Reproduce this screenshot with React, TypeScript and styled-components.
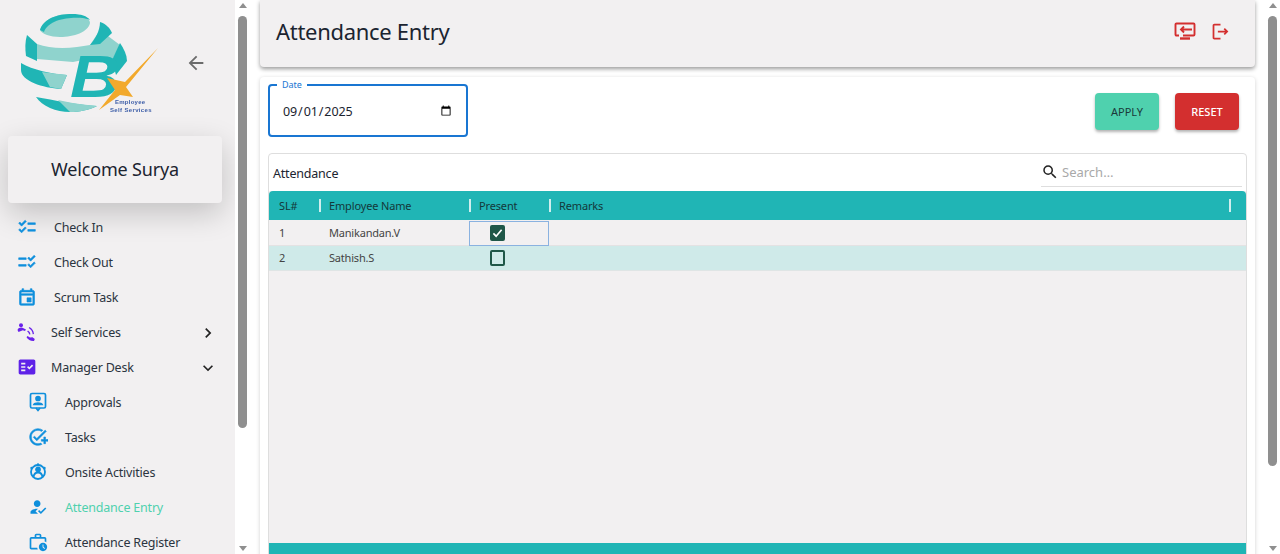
import React from "react";
import styled, { createGlobalStyle } from "styled-components";
import {
  MdArrowBack,
  MdChecklist,
  MdChecklistRtl,
  MdChevronLeft,
  MdChevronRight,
  MdExpandMore,
  MdFactCheck,
  MdHowToReg,
  MdOutlineAddTask,
  MdOutlineEvent,
  MdOutlineLogout,
  MdOutlineWorkHistory,
  MdSearch,
} from "react-icons/md";

const GlobalStyle = createGlobalStyle`
  html, body { margin: 0; padding: 0; height: 100%; overflow: hidden; background: #fff; }
  body {
    font-family: "Noto Sans", "Liberation Sans", sans-serif;
    color: #1f2a37;
  }
  * { box-sizing: border-box; }
`;

const Shell = styled.div`
  display: flex;
  height: 100vh;
  overflow: hidden;
`;

const ScrollTrack = styled.div`
  width: 15px;
  flex: none;
  height: 100vh;
  padding: 3px 3px;
  display: flex;
  flex-direction: column;
  align-items: center;
  background: #fff;
`;

const ScrollArrowUp = styled.span`
  flex: none;
  width: 0;
  height: 0;
  border-left: 4.5px solid transparent;
  border-right: 4.5px solid transparent;
  border-bottom: 5px solid #8f8f8f;
`;

const ScrollArrowDown = styled(ScrollArrowUp)`
  margin-top: auto;
  border-bottom: 0;
  border-top: 5px solid #8f8f8f;
`;

const ScrollThumb = styled.span<{ $height: number }>`
  flex: none;
  width: 9px;
  height: ${(p) => p.$height}px;
  margin-top: 8px;
  border-radius: 5px;
  background: #8f8f8f;
`;

const Sidebar = styled.aside`
  width: 235px;
  flex: none;
  height: 100vh;
  overflow: hidden;
  background: #f2f0f1;
`;

const LogoRow = styled.div`
  height: 128px;
  display: flex;
  align-items: flex-start;
  position: relative;

  > svg {
    filter: blur(0.35px);
  }
`;

const BackButton = styled.button`
  position: absolute;
  left: 185px;
  top: 52px;
  border: 0;
  background: none;
  padding: 0;
  width: 22px;
  height: 22px;
  color: #6b6b6b;
  font-size: 22px;
  line-height: 0;
`;

const WelcomeCard = styled.div`
  margin: 8px 13px 6px 8px;
  height: 67px;
  padding-bottom: 1px;
  display: flex;
  align-items: center;
  justify-content: center;
  border-radius: 4px;
  background: #f2f0f1;
  font-size: 18px;
  letter-spacing: -0.15px;
  color: #1b2430;
  box-shadow: 0 10px 30px rgba(0, 0, 0, 0.2);
`;

const MenuRow = styled.div<{ $indent: number; $active?: boolean }>`
  height: 35px;
  display: flex;
  align-items: center;
  padding: 2px 0 0 ${(p) => p.$indent}px;
  font-size: 12.5px;
  letter-spacing: -0.2px;
  color: ${(p) => (p.$active ? "#4fd1ae" : "#2b3440")};
  position: relative;
`;

const MenuIcon = styled.span<{ $width: number; $color?: string; $bold?: boolean }>`
  width: ${(p) => p.$width}px;
  flex: none;
  margin-top: -2px;
  display: flex;
  align-items: center;
  font-size: 20px;
  color: ${(p) => p.$color ?? "#0f8fdc"};

  ${(p) => (p.$bold ? `svg path:not([fill="none"]) { stroke-width: 0.7; }` : "")}
`;

const MenuCaret = styled.span`
  position: absolute;
  left: 198px;
  top: 9px;
  font-size: 20px;
  line-height: 0;
  color: #222;
`;

const Main = styled.main`
  flex: 1;
  min-width: 0;
  height: 100vh;
  overflow: hidden;
  padding: 0 10px;
  background: #fff;
`;

const TitleBar = styled.header`
  height: 67px;
  display: flex;
  align-items: center;
  justify-content: space-between;
  padding: 0 24px 5px 16px;
  background: #f2f0f1;
  border-radius: 0 0 4px 4px;
  box-shadow: 0 2px 4px rgba(0, 0, 0, 0.4);
`;

const Title = styled.h1`
  margin: 0;
  font-size: 22px;
  letter-spacing: -0.3px;
  font-weight: 400;
  color: #1b2430;
`;

const TitleActions = styled.div`
  display: flex;
  align-items: center;
  gap: 14px;
  color: #d32f2f;
  font-size: 21px;
`;

const Card = styled.section`
  margin-top: 10px;
  height: 555px;
  padding: 8px;
  background: #fff;
  border-radius: 4px;
  box-shadow: 0 1px 4px rgba(0, 0, 0, 0.18);
`;

const FilterRow = styled.div`
  height: 68px;
  display: flex;
  justify-content: space-between;
  align-items: flex-start;
`;

const DateField = styled.fieldset`
  width: 200px;
  height: 58px;
  margin: -6px 0 0;
  padding: 0 12px 0 12px;
  border: 2px solid #1976d2;
  border-radius: 4px;
  display: flex;
  align-items: center;

  legend {
    margin-left: -5px;
    padding: 0 5px;
    font-size: 9px;
    line-height: 11px;
    color: #1976d2;
  }
`;

const DateInput = styled.input`
  width: 100%;
  margin-top: -3px;
  padding: 0;
  border: 0;
  outline: 0;
  background: none;
  font-family: inherit;
  font-size: 12.5px;
  letter-spacing: -0.1px;
  color: #1b2430;
`;

const FilterActions = styled.div`
  display: flex;
  gap: 16px;
  padding: 8px 8px 0 0;
`;

const ActionButton = styled.button<{ $danger?: boolean }>`
  width: 64px;
  height: 37px;
  padding: 0;
  border: 0;
  border-radius: 4px;
  font-family: inherit;
  font-size: 11px;
  font-weight: ${(p) => (p.$danger ? 500 : 400)};
  background: ${(p) => (p.$danger ? "#d32f2f" : "#4fd1ae")};
  color: ${(p) => (p.$danger ? "#fff" : "#1b3a3a")};
  box-shadow: 0 2px 3px rgba(0, 0, 0, 0.3);
`;

const TableBox = styled.div`
  border: 1px solid #dedede;
  border-radius: 4px;
  background: #f2f0f1;
`;

const TableToolbar = styled.div`
  height: 37px;
  display: flex;
  align-items: center;
  justify-content: space-between;
  padding: 2px 4px 0;
  background: #fff;
  border-radius: 4px 4px 0 0;
  font-size: 12.5px;
  letter-spacing: -0.2px;
  color: #1b2430;
`;

const SearchBox = styled.div`
  width: 201px;
  height: 33px;
  margin-bottom: 6px;
  padding-top: 4px;
  display: flex;
  align-items: center;
  gap: 3px;
  border-bottom: 1px solid #dedede;
  font-size: 13px;
  letter-spacing: 0;
  color: #a9a9a9;

  svg {
    font-size: 18px;
    color: #222;
  }
`;

const TableGrid = styled.div`
  display: grid;
  grid-template-columns: 50px 150px 80px 1fr;
`;

const HeadCell = styled.div`
  height: 29px;
  margin-bottom: 1px;
  display: flex;
  align-items: center;
  padding-left: 10px;
  position: relative;
  background: #20b5b5;
  font-size: 11px;
  letter-spacing: -0.15px;
  color: #14383a;

  &::after {
    content: "";
    position: absolute;
    z-index: 1;
    right: -2px;
    top: 8px;
    width: 2px;
    height: 13px;
    background: #cfeeee;
  }

  &:first-child {
    border-top-left-radius: 4px;
  }
`;

const RemarksHead = styled(HeadCell)`
  border-top-right-radius: 4px;

  &::after {
    right: 15px;
  }
`;

const Cell = styled.div<{ $striped?: boolean; $focused?: boolean }>`
  height: 25px;
  display: flex;
  align-items: center;
  padding: 0 0 2px 10px;
  font-size: 11px;
  letter-spacing: -0.2px;
  color: #444;
  background: ${(p) => (p.$striped ? "#cfeae9" : "#f2f0f1")};
  border-bottom: 1px solid ${(p) => (p.$striped ? "#dfe5e5" : "#e4e2e3")};
  outline: ${(p) => (p.$focused ? "1px solid #8ab2e0" : "none")};
  outline-offset: -1px;
`;

const CheckBox = styled.span<{ $checked?: boolean }>`
  width: 15px;
  height: 16px;
  margin: 2px 0 0 11px;
  display: flex;
  align-items: center;
  justify-content: center;
  border-radius: 2px;
  border: 2px solid #1f5748;
  background: ${(p) => (p.$checked ? "#1f5748" : "transparent")};
`;

const TableBody = styled.div`
  height: 272px;
`;

const TableFooter = styled.footer`
  height: 52px;
  display: flex;
  justify-content: flex-end;
  align-items: flex-start;
  gap: 8px;
  padding: 8px 12px 0 0;
  background: #20b5b5;
  font-size: 12px;
  color: #14383a;

  svg {
    font-size: 24px;
    color: #12696b;
  }
`;

const PageLabel = styled.span`
  margin-right: 16px;
`;

const ScreenIcon = () => (
  <svg width="22" height="22" viewBox="0 0 22 22" fill="none" stroke="currentColor" strokeWidth="1.9">
    <path d="M5 15.5H2.5a1 1 0 0 1-1-1V4.5a1 1 0 0 1 1-1h17a1 1 0 0 1 1 1v10a1 1 0 0 1-1 1H9" />
    <path d="M7 9.5h11M10 6.5l-3 3 3 3" />
    <path d="M6 18.5h10" strokeWidth="2.4" />
  </svg>
);

const SelfServiceIcon = () => (
  <svg width="20" height="20" viewBox="0 0 20 20" fill="#6a22ea">
    <circle cx="4" cy="3.2" r="2" />
    <path d="M0.5 8c1-2.5 4-3 6-1.8l2.5 1.3-1 1.6-2.2-.9L1.5 10z" />
    <path d="M11 8.5a5.5 5.5 0 0 1 2.5 3.8l-1.3.3a4.5 4.5 0 0 0-2-3zM12.5 5a9 9 0 0 1 4.5 7l-1.3.2a8 8 0 0 0-4-6.1z" />
    <path d="M10.5 14l2.5 1.6 2.5-.4 2.3 1.8-.8 2c-3 .4-6-1.4-7.5-3.8z" />
  </svg>
);

const ApprovalIcon = () => (
  <svg width="20" height="20" viewBox="0 0 20 20" fill="none" stroke="#0f8fdc" strokeWidth="1.7">
    <rect x="2.5" y="1.5" width="15" height="14.5" rx="1.5" />
    <circle cx="10" cy="6.5" r="2" fill="#0f8fdc" />
    <path d="M6 12.5c1-2 7-2 8 0z" fill="#0f8fdc" />
    <path d="M8 16l2 2.4 2-2.4" />
  </svg>
);

const OnsiteIcon = () => (
  <svg width="20" height="20" viewBox="0 0 20 20" fill="none" stroke="#0f8fdc" strokeWidth="1.8">
    <circle cx="10" cy="10" r="7" />
    <circle cx="10" cy="7.5" r="2" fill="#0f8fdc" />
    <path d="M5.5 15c.5-3.5 2.5-4.5 4.5-4.5s4 1 4.5 4.5" />
    <circle cx="10" cy="2.5" r="1.2" fill="#0f8fdc" stroke="none" />
    <circle cx="3.5" cy="6" r="1.2" fill="#0f8fdc" stroke="none" />
    <circle cx="16.5" cy="6" r="1.2" fill="#0f8fdc" stroke="none" />
  </svg>
);

const BrandLogo = () => (
  <svg width="170" height="125" viewBox="0 0 170 125">
    <path d="M40 30C44 18 58 14 70 14c12 0 20 4 20 9-2 9-16 14-30 14-10 0-18-3-20-7z" fill="#8fd3cd" />
    <path d="M40 30C44 18 58 14 72 14c9 0 15 2 18 6-8-4-40-4-46 12z" fill="#20b5b5" />
    <path d="M37 44c16 6 38 4 53 1l10-15 20 15-8 15-24-1-15 3-36-3z" fill="#8fd3cd" />
    <path d="M27 35l10 9 0 17-11-5c-1-8-1-14 1-21z" fill="#20b5b5" />
    <path d="M100 22c6 2 10 6 12 11l-12 11-10 1c5-6 10-14 10-23z" fill="#20b5b5" />
    <path d="M120 43c4 6 7 12 7 18l-11 14-4-15z" fill="#20b5b5" />
    <path d="M21 63c12 7 30 11 46 12l-6 14c-18-1-40-8-40-19z" fill="#20b5b5" />
    <path d="M42 72l25 3-6 14-11-2z" fill="#8fd3cd" />
    <path d="M36 97c18 3 40 8 61 9-8 4-18 6-27 6-14 0-28-6-34-15z" fill="#20b5b5" />
    <path d="M58 100c12 3 28 5 39 6-8 4-18 6-27 6z" fill="#8fd3cd" />
    <text transform="translate(70 97) scale(1.15 1)" fontFamily="Liberation Sans" fontWeight="700" fontStyle="italic" fontSize="60" fill="#20b5b5">B</text>
    <path d="M158 48L125 82 107 78l8 12-16 20 21-15 13 2-7-10z" fill="#f2a92c" />
    <text x="115" y="104" fontFamily="Liberation Sans" fontWeight="700" fontSize="6" letterSpacing="0.25" fill="#3d5ea8">Employee</text>
    <text x="110" y="112" fontFamily="Liberation Sans" fontWeight="700" fontSize="6" letterSpacing="0.35" fill="#3d5ea8">Self Services</text>
  </svg>
);

const rows = [
  { sl: 1, name: "Manikandan.V", present: true },
  { sl: 2, name: "Sathish.S", present: false },
];

function Scrollbar({ thumb }: { thumb: number }) {
  return (
    <ScrollTrack>
      <ScrollArrowUp />
      <ScrollThumb $height={thumb} />
      <ScrollArrowDown />
    </ScrollTrack>
  );
}

function SideMenu() {
  return (
    <Sidebar>
      <LogoRow>
        <BrandLogo />
        <BackButton aria-label="Collapse">
          <MdArrowBack />
        </BackButton>
      </LogoRow>
      <WelcomeCard>Welcome Surya</WelcomeCard>
      <MenuRow $indent={17}>
        <MenuIcon $width={37} $bold><MdChecklist /></MenuIcon>Check In
      </MenuRow>
      <MenuRow $indent={17}>
        <MenuIcon $width={37} $bold><MdChecklistRtl /></MenuIcon>Check Out
      </MenuRow>
      <MenuRow $indent={17}>
        <MenuIcon $width={37} $bold><MdOutlineEvent /></MenuIcon>Scrum Task
      </MenuRow>
      <MenuRow $indent={17}>
        <MenuIcon $width={34}><SelfServiceIcon /></MenuIcon>Self Services
        <MenuCaret><MdChevronRight /></MenuCaret>
      </MenuRow>
      <MenuRow $indent={17}>
        <MenuIcon $width={34} $color="#5f22e8"><MdFactCheck /></MenuIcon>Manager Desk
        <MenuCaret><MdExpandMore /></MenuCaret>
      </MenuRow>
      <MenuRow $indent={28}>
        <MenuIcon $width={37}><ApprovalIcon /></MenuIcon>Approvals
      </MenuRow>
      <MenuRow $indent={28}>
        <MenuIcon $width={37} $bold><MdOutlineAddTask /></MenuIcon>Tasks
      </MenuRow>
      <MenuRow $indent={28}>
        <MenuIcon $width={37}><OnsiteIcon /></MenuIcon>Onsite Activities
      </MenuRow>
      <MenuRow $indent={28} $active>
        <MenuIcon $width={37}><MdHowToReg /></MenuIcon>Attendance Entry
      </MenuRow>
      <MenuRow $indent={28}>
        <MenuIcon $width={37}><MdOutlineWorkHistory /></MenuIcon>Attendance Register
      </MenuRow>
    </Sidebar>
  );
}

function AttendanceTable() {
  return (
    <TableBox>
      <TableToolbar>
        Attendance
        <SearchBox>
          <MdSearch />
          Search…
        </SearchBox>
      </TableToolbar>
      <TableGrid>
        <HeadCell>SL#</HeadCell>
        <HeadCell>Employee Name</HeadCell>
        <HeadCell>Present</HeadCell>
        <RemarksHead>Remarks</RemarksHead>
        {rows.map((row, i) => (
          <React.Fragment key={row.sl}>
            <Cell $striped={i % 2 === 1}>{row.sl}</Cell>
            <Cell $striped={i % 2 === 1}>{row.name}</Cell>
            <Cell $striped={i % 2 === 1} $focused={i === 0}>
              <CheckBox $checked={row.present}>
                {row.present && (
                  <svg width="12" height="12" viewBox="0 0 12 12" fill="none" stroke="#fff" strokeWidth="1.8">
                    <path d="M1.5 6.5l3 3 6-7" />
                  </svg>
                )}
              </CheckBox>
            </Cell>
            <Cell $striped={i % 2 === 1} />
          </React.Fragment>
        ))}
      </TableGrid>
      <TableBody />
      <TableFooter>
        <PageLabel>1–2 of 2</PageLabel>
        <MdChevronLeft />
        <MdChevronRight />
      </TableFooter>
    </TableBox>
  );
}

export default function App() {
  return (
    <>
      <GlobalStyle />
      <Shell>
        <SideMenu />
        <Scrollbar thumb={412} />
        <Main>
          <TitleBar>
            <Title>Attendance Entry</Title>
            <TitleActions>
              <ScreenIcon />
              <MdOutlineLogout />
            </TitleActions>
          </TitleBar>
          <Card>
            <FilterRow>
              <DateField>
                <legend>Date</legend>
                <DateInput type="date" defaultValue="2025-09-01" />
              </DateField>
              <FilterActions>
                <ActionButton>APPLY</ActionButton>
                <ActionButton $danger>RESET</ActionButton>
              </FilterActions>
            </FilterRow>
            <AttendanceTable />
          </Card>
        </Main>
        <Scrollbar thumb={450} />
      </Shell>
    </>
  );
}
